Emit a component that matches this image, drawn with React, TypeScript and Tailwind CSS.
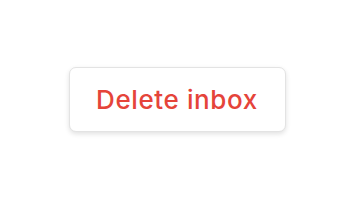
export default function App() {
  return (
    <div className="flex h-[204px] w-[354px] items-center justify-center bg-white pb-[5px]">
      <button
        className="flex h-[65px] w-[217px] items-center justify-center rounded-[7px] border border-[#e3e3e3] bg-white text-[26px] font-medium tracking-[0.6px] text-[#e5443a] shadow-[0_2px_5px_rgba(0,0,0,0.12)]"
        style={{ fontFamily: 'Inter, "Noto Sans", sans-serif' }}
      >
        Delete inbox
      </button>
    </div>
  )
}
